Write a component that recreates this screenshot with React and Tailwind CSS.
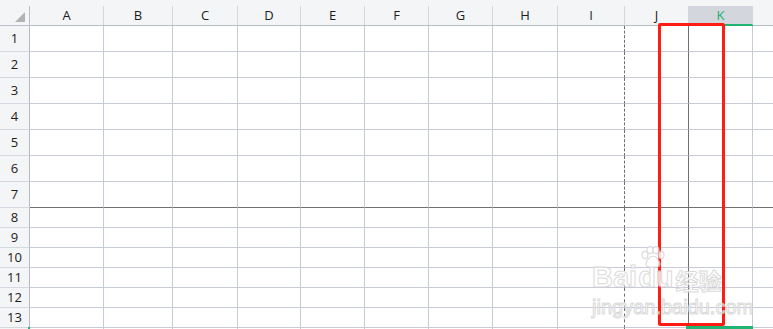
import React from 'react';

const COLS = ['A', 'B', 'C', 'D', 'E', 'F', 'G', 'H', 'I', 'J', 'K', ''];
const ROWS = [
  { n: 1, h: 'h-[26px]' },
  { n: 2, h: 'h-[26px]' },
  { n: 3, h: 'h-[26px]' },
  { n: 4, h: 'h-[26px]' },
  { n: 5, h: 'h-[26px]' },
  { n: 6, h: 'h-[26px]' },
  { n: 7, h: 'h-[26px]' },
  { n: 8, h: 'h-[20px]' },
  { n: 9, h: 'h-[20px]' },
  { n: 10, h: 'h-[20px]' },
  { n: 11, h: 'h-[20px]' },
  { n: 12, h: 'h-[20px]' },
  { n: 13, h: 'h-[20px]' },
  { n: null, h: 'h-[20px]' },
];

const gridCols =
  'grid grid-cols-[30px_74px_69px_65px_63px_64px_64px_64px_65px_67px_64px_64px_1fr]';

// right border of each body column
const colBorder = (i) => {
  if (i === 8) return 'border-r [border-right-style:dashed] border-r-[#6e6e6e]'; // page break after I
  if (i === 9) return 'border-r border-r-[#6f6f6f]'; // J | K
  if (i === 11) return '';
  return 'border-r border-r-[#c6cbd7]';
};

const HeaderCell = ({ label, index }) => {
  const selected = label === 'K';
  return (
    <div className={`h-[26px] border-b ${selected ? 'border-b-[#21b573]' : 'border-b-[#b9bec9]'}`}>
      <div
        className={`mt-[6px] h-[19px] flex items-center justify-center text-[13px] leading-none
          ${index === 11 ? '' : 'border-r border-r-[#d3d6de]'}
          ${selected ? 'bg-[#d3d6dc] text-[#1fae72] border-b border-b-[#21b573]' : 'text-[#1c1c1c]'}`}
      >
        {label}
      </div>
    </div>
  );
};

const BodyRow = ({ n, h }) => (
  <>
    <div
      className={`${h} flex items-center justify-center bg-[#f4f5f7] text-[13px] text-[#1c1c1c] border-r border-r-[#b4b9c4] border-b border-b-[#d5d8df]`}
    >
      {n}
    </div>
    {COLS.map((c, i) => (
      <div
        key={i}
        className={`${h} bg-white border-b ${n === 7 ? 'border-b-[#707070]' : 'border-b-[#c6cbd7]'} ${colBorder(i)}`}
      />
    ))}
  </>
);

const Paw = () => (
  <svg width="26" height="22" viewBox="0 0 26 22" fill="white" stroke="#d4d4d4" strokeWidth="1.2">
    <ellipse cx="5" cy="9" rx="3" ry="3.6" />
    <ellipse cx="10" cy="4" rx="3" ry="3.6" />
    <ellipse cx="16" cy="4" rx="3" ry="3.6" />
    <ellipse cx="21" cy="9" rx="3" ry="3.6" />
    <path d="M13 10c-3 0-7 5-7 8 0 2 2 3 4 3h6c2 0 4-1 4-3 0-3-4-8-7-8z" />
  </svg>
);

export default function App() {
  return (
    <div
      className="relative w-[773px] h-[329px] overflow-hidden bg-white"
      style={{ fontFamily: '"Open Sans", "Noto Sans", sans-serif' }}
    >
      {/* column header */}
      <div className={`${gridCols} bg-[#f4f5f7]`}>
        <div className="h-[26px] border-b border-b-[#b9bec9]">
          <div className="mt-[6px] h-[19px] border-r border-r-[#b9bec9] flex items-end justify-end pr-[4px] pb-[3px]">
            <svg width="10" height="10" viewBox="0 0 10 10">
              <polygon points="10,0 10,10 0,10" fill="#b3b3b3" />
            </svg>
          </div>
        </div>
        {COLS.map((c, i) => (
          <HeaderCell key={i} label={c} index={i} />
        ))}
      </div>

      {/* rows */}
      <div className={gridCols}>
        {ROWS.map((r, i) => (
          <BodyRow key={i} {...r} />
        ))}
      </div>

      {/* selection overlays */}
      <div className="absolute left-[686px] top-[326px] w-[67px] h-[3px] bg-[#21b573]" />
      <div className="absolute left-[28px] top-[327px] w-[2px] h-[2px] bg-[#21b573]" />

      {/* red annotation box */}
      <div className="absolute left-[658px] top-[23px] w-[67px] h-[303px] border-[3px] border-[#ff1c12] rounded-[2px]" />

      {/* watermark */}
      <div className="absolute left-[592px] top-[246px] opacity-80 pointer-events-none">
        <div className="absolute left-[48px] top-0">
          <Paw />
        </div>
        <div
          className="mt-[17px] flex items-end font-bold text-[29px] leading-none text-white [-webkit-text-stroke:1px_#d2d2d2]"
          style={{ fontFamily: '"Liberation Sans", "Noto Sans CJK SC", sans-serif' }}
        >
          <span>Bai</span>
          <span className="ml-[1px]">du</span>
          <span className="ml-[2px] text-[23px]" style={{ fontFamily: '"Noto Sans CJK SC", sans-serif' }}>
            经验
          </span>
        </div>
        <div
          className="mt-[5px] text-[20px] leading-none text-white [-webkit-text-stroke:1px_#d2d2d2]"
          style={{ fontFamily: '"Liberation Sans", sans-serif' }}
        >
          jingyan.baidu.com
        </div>
      </div>
    </div>
  );
}
